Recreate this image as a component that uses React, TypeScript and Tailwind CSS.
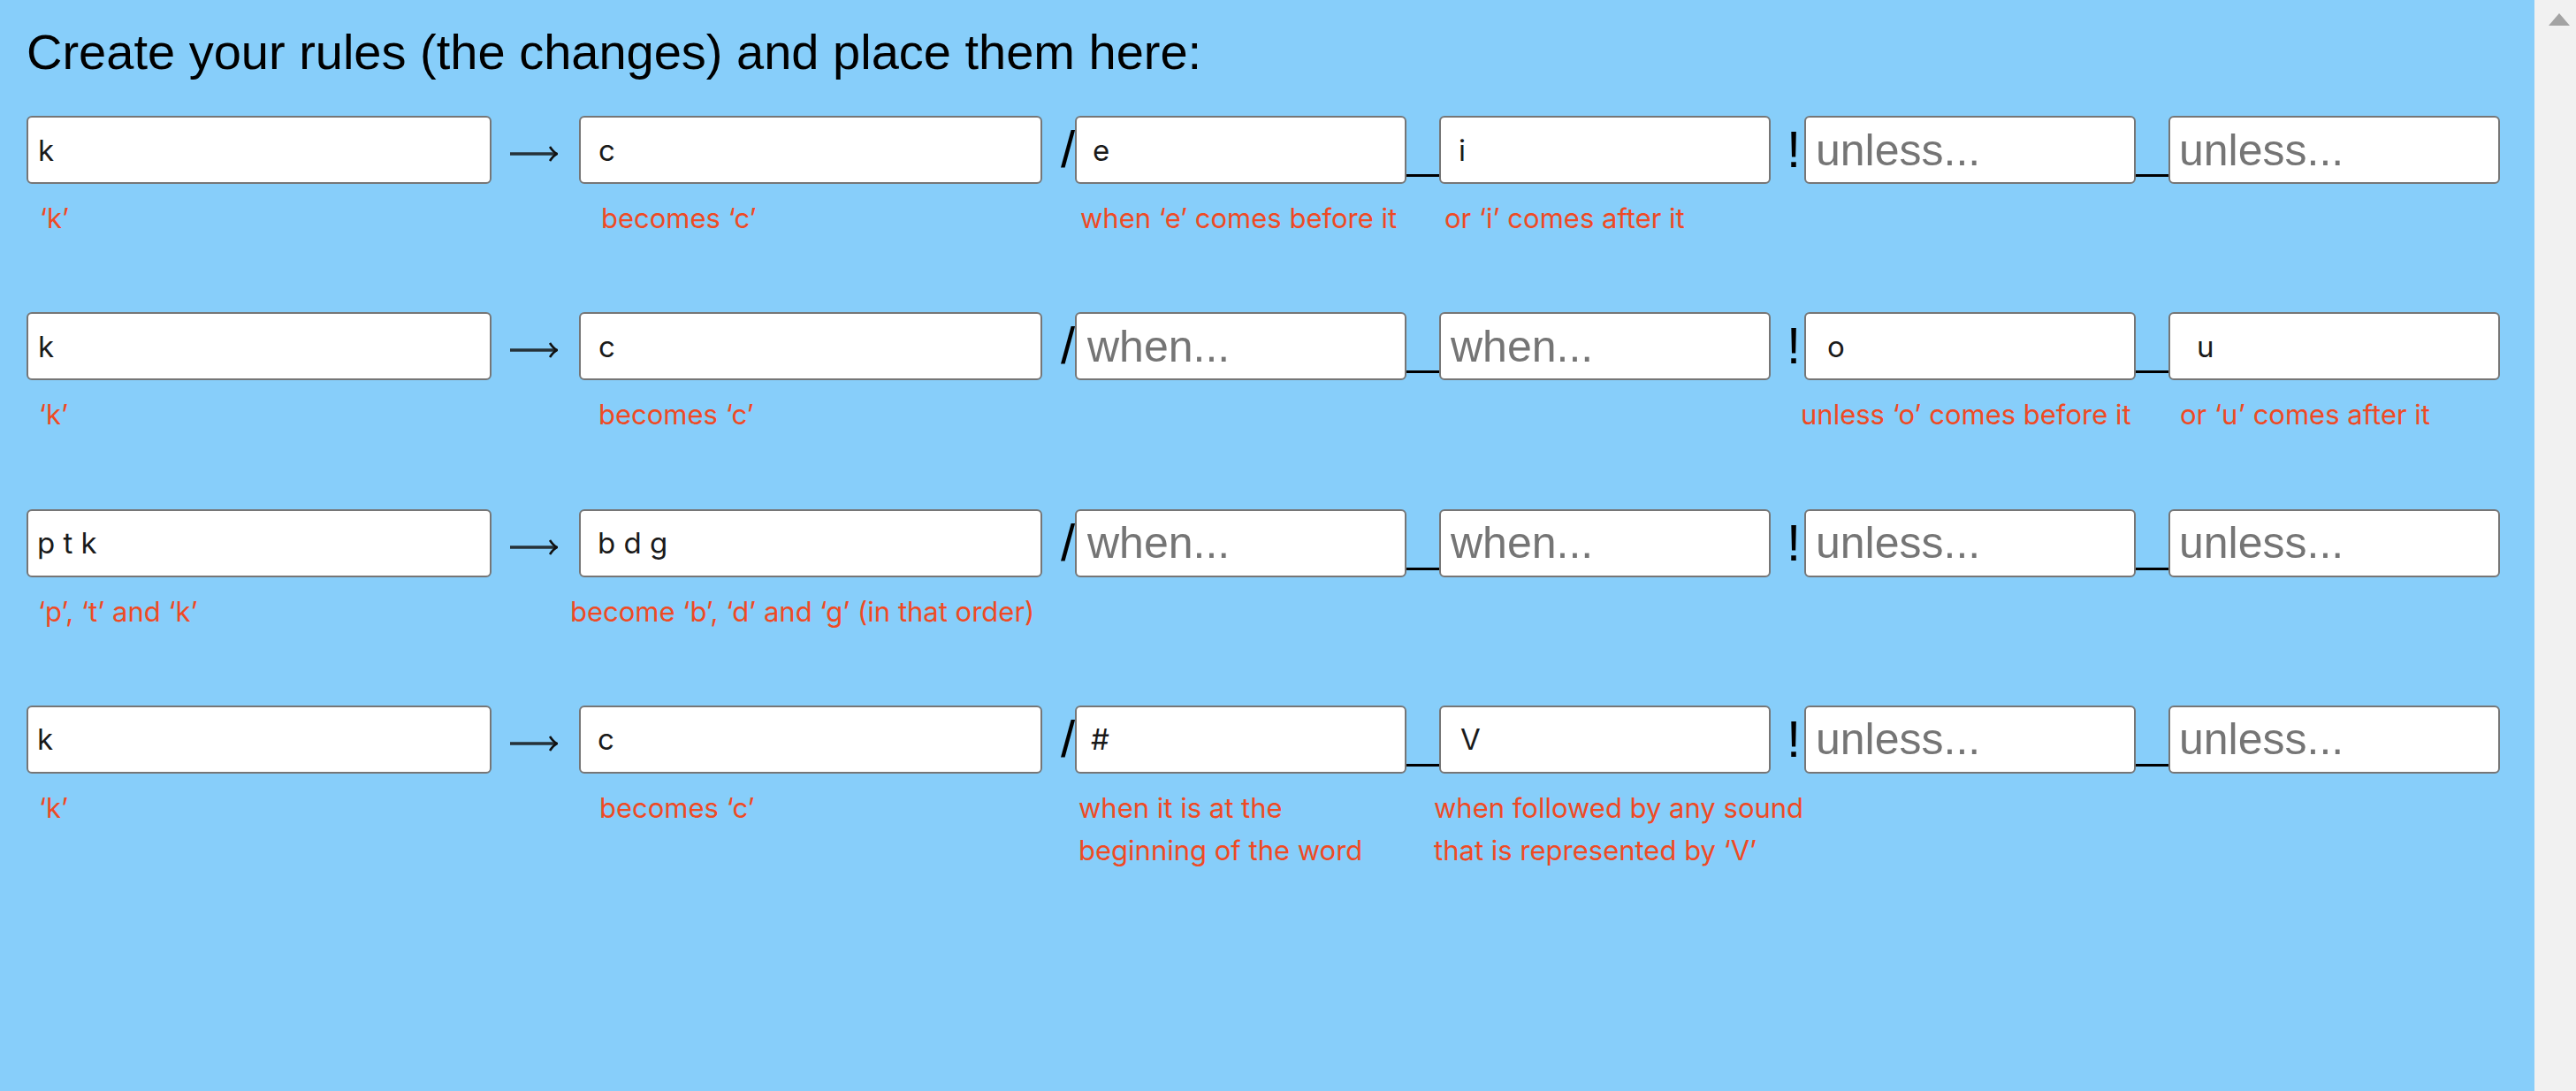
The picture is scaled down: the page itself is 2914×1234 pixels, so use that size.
import React from "react";

type Cell = {
  value?: string;
  ph?: string;
  pl: string;
  label?: React.ReactNode;
  lml?: string;
};

const WIDTHS = ["w-[526px]", "w-[524px]", "w-[375px]", "w-[375px]", "w-[375px]", "w-[375px]"];

const ROWS: Cell[][] = [
  [
    { value: "k", pl: "pl-[11px]", label: "‘k’", lml: "ml-[15px]" },
    { value: "c", pl: "pl-[20px]", label: "becomes ‘c’", lml: "ml-[25px]" },
    { value: "e", pl: "pl-[18px]", label: "when ‘e’ comes before it", lml: "ml-[6px]" },
    { value: "i", pl: "pl-[20px]", label: "or ‘i’ comes after it", lml: "ml-[6px]" },
    { ph: "unless...", pl: "pl-[11px]" },
    { ph: "unless...", pl: "pl-[10px]" },
  ],
  [
    { value: "k", pl: "pl-[11px]", label: "‘k’", lml: "ml-[14px]" },
    { value: "c", pl: "pl-[20px]", label: "becomes ‘c’", lml: "ml-[22px]" },
    { ph: "when...", pl: "pl-[12px]" },
    { ph: "when...", pl: "pl-[11px]" },
    { value: "o", pl: "pl-[24px]", label: "unless ‘o’ comes before it", lml: "-ml-[4px]" },
    { value: "u", pl: "pl-[30px]", label: "or ‘u’ comes after it", lml: "ml-[13px]" },
  ],
  [
    { value: "p t k", pl: "pl-[10px]", label: "‘p’, ‘t’ and ‘k’", lml: "ml-[13px]" },
    { value: "b d g", pl: "pl-[19px]", label: "become ‘b’, ‘d’ and ‘g’ (in that order)", lml: "-ml-[10px]" },
    { ph: "when...", pl: "pl-[12px]" },
    { ph: "when...", pl: "pl-[11px]" },
    { ph: "unless...", pl: "pl-[11px]" },
    { ph: "unless...", pl: "pl-[10px]" },
  ],
  [
    { value: "k", pl: "pl-[10px]", label: "‘k’", lml: "ml-[14px]" },
    { value: "c", pl: "pl-[19px]", label: "becomes ‘c’", lml: "ml-[23px]" },
    {
      value: "#",
      pl: "pl-[16px]",
      label: (
        <>
          when it is at the
          <br />
          beginning of the word
        </>
      ),
      lml: "ml-[4px]",
    },
    {
      value: "V",
      pl: "pl-[22px]",
      label: (
        <>
          when followed by any sound
          <br />
          that is represented by ‘V’
        </>
      ),
      lml: "-ml-[6px]",
    },
    { ph: "unless...", pl: "pl-[11px]" },
    { ph: "unless...", pl: "pl-[10px]" },
  ],
];

function Field({ cell, width }: { cell: Cell; width: string }) {
  const base =
    "block w-full h-[77px] bg-white border-2 border-[#767676] rounded-[6px] outline-none " + cell.pl;
  const font = cell.value
    ? " font-['Inter',sans-serif] text-[33px] text-[#1a1a1a]"
    : " font-['Liberation_Sans',Arial,sans-serif] text-[50px] text-[#1a1a1a] placeholder:text-[#757575]";
  return (
    <div className={"flex flex-col shrink-0 " + width}>
      <input className={base + font} defaultValue={cell.value ?? ""} placeholder={cell.ph} />
      {cell.label ? (
        <div
          className={
            "mt-[15px] font-['Inter',sans-serif] text-[31px] leading-[48px] text-[#ef4a24] whitespace-nowrap " +
            (cell.lml ?? "")
          }
        >
          {cell.label}
        </div>
      ) : null}
    </div>
  );
}

function Arrow() {
  return (
    <div className="w-[99px] h-[77px] shrink-0 pl-[21px] pt-[33px]">
      <svg width="54" height="20" viewBox="0 0 54 20">
        <line x1="0" y1="10" x2="52" y2="10" stroke="#263238" strokeWidth="3.6" />
        <path d="M45 2 Q49 8 53 10 Q49 12 45 18" fill="none" stroke="#111" strokeWidth="2.6" />
      </svg>
    </div>
  );
}

function Glyph({ ch, w }: { ch: string; w: string }) {
  return (
    <div
      className={
        "h-[77px] shrink-0 flex justify-end pt-[9px] font-['Liberation_Sans',Arial,sans-serif] text-[58px] leading-none text-black " +
        w
      }
    >
      <span>{ch}</span>
    </div>
  );
}

function Under() {
  return (
    <div className="w-[37px] h-[77px] shrink-0 flex items-end pb-[8px]">
      <div className="w-full h-[3px] bg-black" />
    </div>
  );
}

function RuleRow({ cells }: { cells: Cell[] }) {
  return (
    <div className="flex items-start">
      <Field cell={cells[0]} width={WIDTHS[0]} />
      <Arrow />
      <Field cell={cells[1]} width={WIDTHS[1]} />
      <Glyph ch="/" w="w-[37px]" />
      <Field cell={cells[2]} width={WIDTHS[2]} />
      <Under />
      <Field cell={cells[3]} width={WIDTHS[3]} />
      <Glyph ch="!" w="w-[38px] pr-[4px]" />
      <Field cell={cells[4]} width={WIDTHS[4]} />
      <Under />
      <Field cell={cells[5]} width={WIDTHS[5]} />
    </div>
  );
}

export default function App() {
  return (
    <div className="flex w-full h-[1234px] overflow-hidden">
      <div className="flex-1 bg-[#87cefa] pl-[30px] pt-[27px]">
        <h1 className="font-['Liberation_Sans',Arial,sans-serif] text-[56px] leading-[64px] text-black">
          Create your rules (the changes) and place them here:
        </h1>
        <div className="mt-[40px] flex flex-col gap-[82.3px]">
          {ROWS.map((r, i) => (
            <RuleRow key={i} cells={r} />
          ))}
        </div>
      </div>
      <div className="w-[47px] shrink-0 bg-[#f1f1f1] pl-[16px] pt-[15px]">
        <svg width="24" height="14" viewBox="0 0 24 14">
          <polygon points="12,0 24,14 0,14" fill="#a3a3a3" />
        </svg>
      </div>
    </div>
  );
}
